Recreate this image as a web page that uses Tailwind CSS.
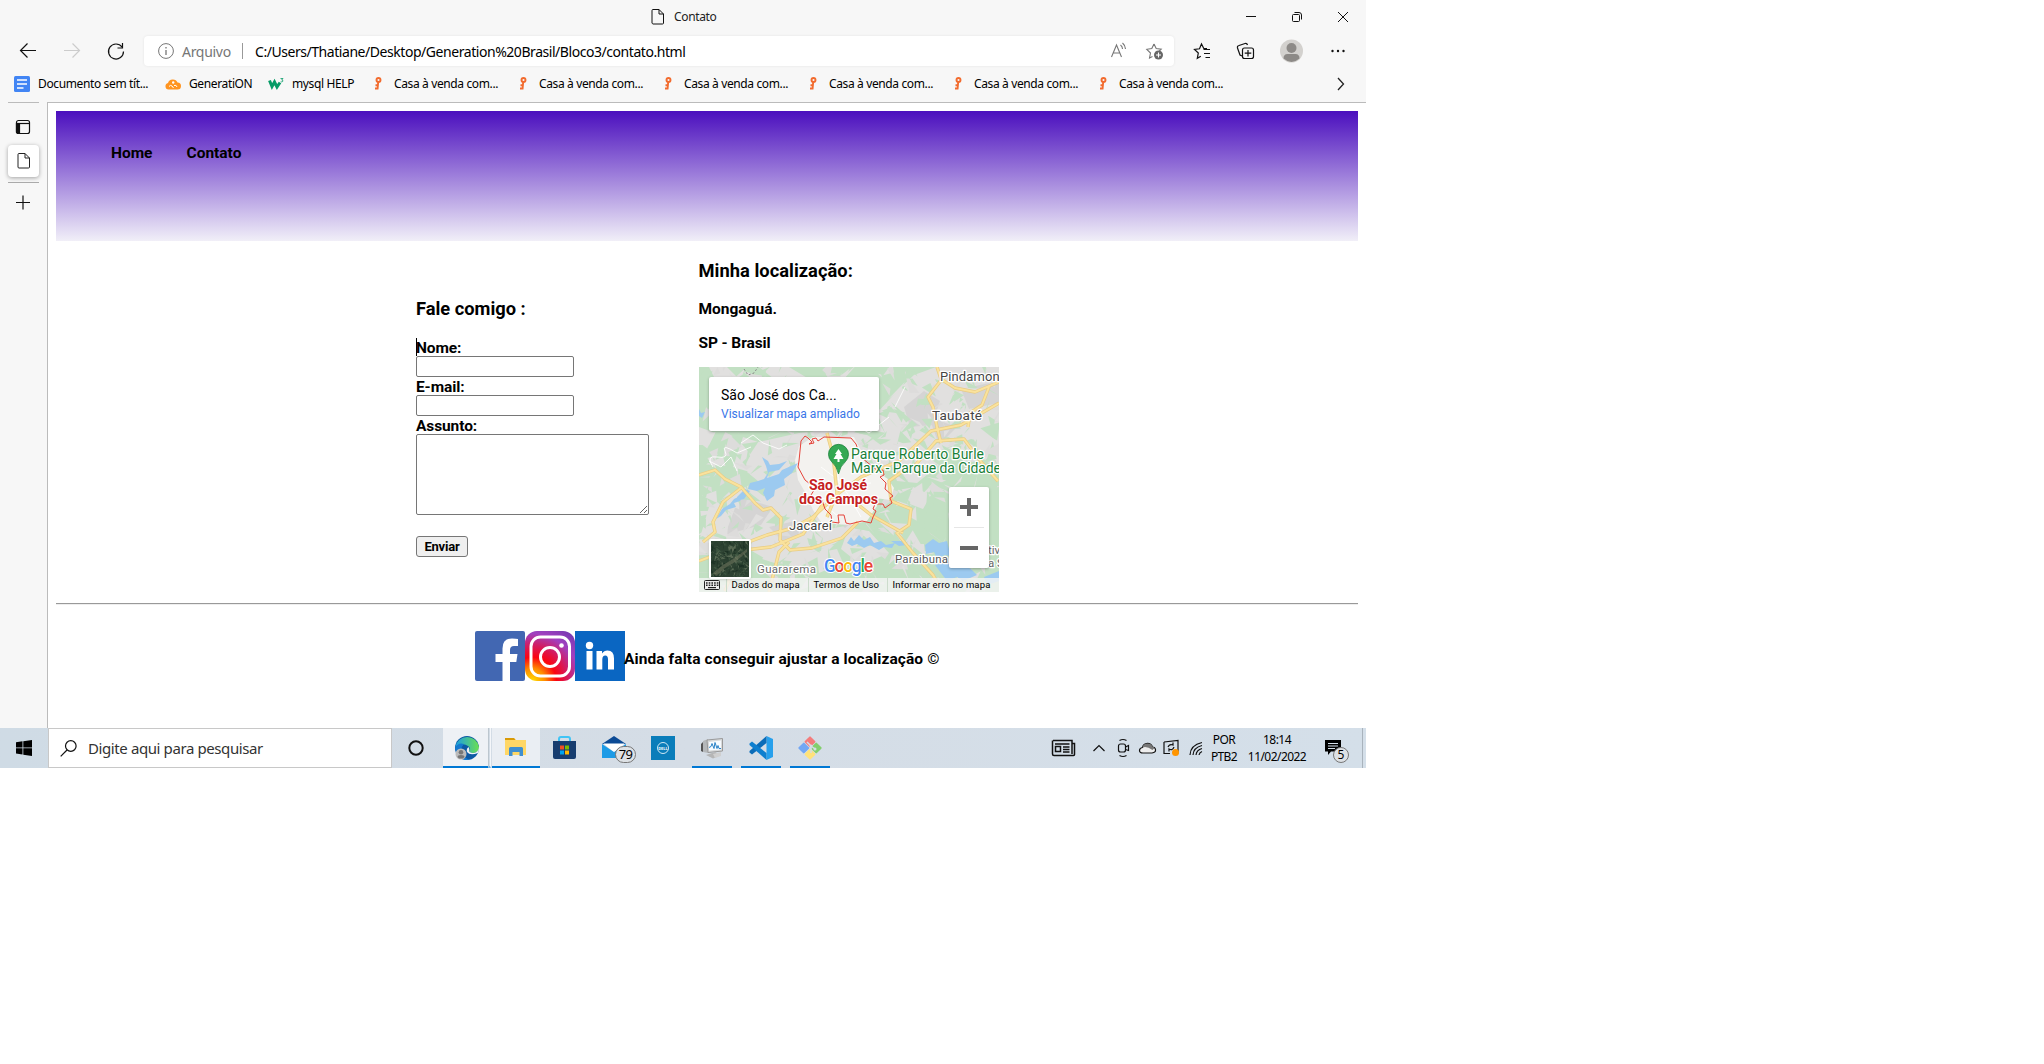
<!DOCTYPE html>
<html lang="pt-BR"><head><meta charset="utf-8"><title>Contato</title>
<script src="https://cdn.jsdelivr.net/npm/@tailwindcss/browser@4"></script></head>
<body class="bg-white font-['Noto_Sans',sans-serif] text-black">
<div class="relative flex h-[768px] w-[1366px] flex-col overflow-hidden bg-[#f7f7f7]">
  <!-- title bar -->
  <div class="flex h-[34px] shrink-0 items-center pl-[650px]">
    <svg class="size-4" viewBox="0 0 16 16" fill="none" stroke="#111"><path d="M3 .5h6l4.500 4.500v9a1 1 0 0 1-1 1H3a1.500 1.500 0 0 1-1-1V1.500a1 1 0 0 1 1-1zM9 .5V5h4.500"/></svg>
    <span class="ml-2 w-[565px] text-[12px] tracking-[-0.35px] text-[#222]">Contato</span>
    <svg class="h-4 w-[110px]" viewBox="0 0 110 16" fill="none" stroke="#111"><path d="M7 7.500h10M99 3l10 10m0-10L99 13"/><rect x="53.500" y="5.500" width="7" height="7" rx="1"/><path d="M55.500 3.500h4.500a2.500 2.500 0 0 1 2.500 2.500v4.500"/></svg>
  </div>
  <!-- address row -->
  <div class="mt-[2px] flex h-[30px] shrink-0 items-center">
    <svg class="h-5 w-[144px]" viewBox="0 0 144 20" fill="none" stroke="#111" stroke-width="1.200"><path d="M36 9.500H20.500m7-7-7 7 7 7"/><path stroke="#ccc" d="M64 9.500h15.500m-7-7 7 7-7 7"/><path d="M122 6a7.500 7.500 0 1 0 1.500 4.500M122.500 2v5h-5"/></svg>
    <div class="flex h-[30px] w-[1030px] items-center rounded bg-white pl-[14px] shadow-[0_0_3px_rgba(0,0,0,0.08)]">
      <svg class="size-4" viewBox="0 0 16 16" fill="none" stroke="#767676"><circle cx="8" cy="8" r="7.400"/><path d="M8 7v5M8 4v1.500" stroke-width="1.300"/></svg>
      <span class="ml-2 w-[60px] text-[14px] tracking-[-0.3px] text-[#767676]">Arquivo</span>
      <span class="h-4 w-px bg-[#999]"></span>
      <span class="ml-3 w-[856px] text-[14px] tracking-[-0.45px] whitespace-nowrap">C:/Users/Thatiane/Desktop/Generation%20Brasil/Bloco3/contato.html</span>
      <svg class="h-5 w-[56px]" viewBox="0 0 56 20" fill="none" stroke="#777" stroke-width="1.100"><path d="M.5 16 5.500 4l5 12M2.200 12h6.600M9.500 4q2 1.500 2 4M11.500 2q3 2.500 3 6"/><path d="m43 3 2.200 4.600 5 .6-2 2M43 3l-2.200 4.600-5 .7L39.500 12l-1 5 3-1.500"/><circle cx="47.500" cy="14" r="4.500" fill="#666" stroke="none"/><path stroke="#fff" d="M47.500 11.500v5M45 14h5"/></svg>
    </div>
    <svg class="h-[30px] w-[190px]" viewBox="0 0 190 30" fill="none" stroke="#111" stroke-width="1.200"><path d="M33 12.500h-3.200L27.500 8l-2 4.800-5 .7 3.800 3.500-1 5.300 3.500-2M29.500 13.500H36M30 17.500h6M31.500 21.500H36"/><path d="M68 20l-2-1-2.500-7q-.5-2 1.500-2.500L71 7.500q2-.5 2.500 1.500"/><rect x="68.500" y="12" width="11" height="10.500" rx="2"/><path d="M74 14v6.500M70.700 17.200h6.600"/><circle cx="117.500" cy="15" r="11.500" fill="#d3d1ce" stroke="none"/><circle cx="117.500" cy="12" r="5" fill="#8d8a87" stroke="none"/><path d="M109.500 22.500q0-4.500 4-4.500h8q4 0 4 4.500-8 7-16 0z" fill="#8d8a87" stroke="none"/><g fill="#111" stroke="none"><circle cx="158.500" cy="15" r="1.200"/><circle cx="164" cy="15" r="1.200"/><circle cx="169.500" cy="15" r="1.200"/></g></svg>
  </div>
  <!-- bookmarks -->
  <div class="flex h-9 shrink-0 items-center pl-[14px] text-[12px] tracking-[-0.37px] whitespace-nowrap">
    <svg class="size-4" viewBox="0 0 16 16"><rect width="16" height="16" rx="1.500" fill="#4285f4"/><path stroke="#fff" stroke-width="1.500" d="M3 4h10M3 8h10M3 12h6.500"/></svg><span class="ml-2 w-[127px]">Documento sem tít...</span>
    <svg class="size-4" viewBox="0 0 16 16"><path d="M3.500 13.500a3.300 3.300 0 0 1-.5-6.500 5 4.800 0 0 1 9.500-.5 3.500 3.500 0 0 1 0 7z" fill="#ff9420"/><circle cx="8.200" cy="6.500" r="1.200" fill="#fff"/><path d="M4 10.500q1.500-2 3-.5l1.500 2M9 9.500q2.500-1 3 1.500" stroke="#fff" fill="none"/></svg><span class="ml-2 w-[79px]">GeneratiON</span>
    <svg class="size-4" viewBox="0 0 16 16"><path d="m1.500 4.500 2.500 6L6.500 6 9 11l3-4.500" fill="none" stroke="#049b66" stroke-width="3"/><path d="M12.500 2.500H15L13.700 4q1.800 0 1 1.500-.8.800-2 .2" fill="none" stroke="#049b66" stroke-width=".8"/></svg><span class="ml-2 w-[78px]">mysql HELP</span>
    <div id="keys" class="flex flex-1 items-center"></div>
    <svg class="mr-[18px] size-4" viewBox="0 0 16 16" fill="none" stroke="#222" stroke-width="1.300"><path d="m6 2 5.500 6L6 14"/></svg>
  </div>
  <div class="flex min-h-0 flex-1">
    <!-- vertical tabs -->
    <div class="flex w-[47px] flex-col items-center">
      <div class="h-px w-[31px] bg-[#bbb]"></div>
      <svg class="mt-4 mr-px size-4" viewBox="0 0 16 16" fill="none" stroke="#111" stroke-width="1.200"><rect x="1.500" y="1.500" width="13" height="13" rx="2"/><path d="M2 4.500h12.500"/><path fill="#111" d="M1.500 4.500h3v10h-2l-1-1z"/></svg>
      <div class="mt-[10px] flex h-8 w-[31px] items-center justify-center rounded bg-white shadow-[0_1px_4px_rgba(0,0,0,0.35)]"><svg class="size-4" viewBox="0 0 16 16" fill="none" stroke="#222"><path d="M3 .5h6l4.500 4.500v9a1 1 0 0 1-1 1H3a1 1 0 0 1-1-1V1.500a1 1 0 0 1 1-1zM9 .5V5h4.500"/></svg></div>
      <div class="mt-[5px] h-px w-[31px] bg-[#aaa]"></div>
      <svg class="mt-3 mr-[2px] size-4" viewBox="0 0 16 16" stroke="#111" stroke-width="1.200"><path d="M1 7.500h14M8 .5v14"/></svg>
    </div>
    <!-- page -->
    <div class="flex-1 border-t border-l border-[#bbb] bg-white px-2 pt-2 font-['Roboto',sans-serif] font-bold">
      <nav class="flex h-[130px] gap-[34px] bg-[linear-gradient(to_bottom,#4b0fbe,#f1eff8)] pt-[30px] pl-[55px] text-[15.5px] leading-6"><span>Home</span><span>Contato</span></nav>
      <main class="flex h-[362px]">
        <form class="ml-[360px] flex w-[282.500px] shrink-0 flex-col items-start pt-[57px] text-[15.5px] tracking-[-0.1px]">
          <h3 class="text-[18.3px] leading-[22px] tracking-normal">Fale comigo :</h3>
          <label class="mt-[18px] flex h-[18px] items-center border-l border-black leading-[18px]"><span class="-ml-px pt-px">Nome:</span></label>
          <input class="h-[21px] w-[158px] shrink-0 rounded-[2px] border border-[#767676]">
          <label class="h-[18px] leading-[21px]">E-mail:</label>
          <input class="h-[21px] w-[158px] shrink-0 rounded-[2px] border border-[#767676]">
          <label class="h-[18px] leading-[21px]">Assunto:</label>
          <textarea class="h-[81px] w-[233px] shrink-0 rounded-[2px] border border-[#767676]"></textarea>
          <button type="button" class="mt-[21px] h-[21px] w-[52px] shrink-0 rounded-[3px] border border-[#767676] bg-[#efefef] text-[13px] leading-[18px] tracking-[-0.2px]">Enviar</button>
        </form>
        <section class="w-[300px] shrink-0 pt-[19px] text-[15.500px]">
          <h3 class="text-[18.300px] leading-[22px] tracking-[0.04px]">Minha localização:</h3>
          <p class="mt-[17px] leading-5">Mongaguá.</p><p class="mt-[14px] leading-5 tracking-[-0.1px]">SP - Brasil</p>
          <div class="relative mt-[14px] h-[225px] w-[300px] overflow-hidden font-normal tracking-normal">
            <svg class="absolute inset-0" width="300" height="225" viewBox="0 0 300 225" font-family="Roboto, sans-serif">
              <rect width="300" height="225" fill="#c2e0c3"/>
              <g fill="#e1e0df">
                <path d="M10 0h18l10 10-20 6zM60 0h30l20 12H75zM200 22l15-14 22-8h63v78l-28-6-22 8-34 14-16-10-30 12-8-12 24-18-8-20zM100 66l40-4 28 6 25 15-8 30-25 40-30 30-40-12-14-30-20 4 14-22-22-18 20-14-18-14zM44 70l24 8 6 10-20 18-20-6zM10 140l40-22 34 26 30 16-28 14-40 6-30 12-16-18z"/>
                <path d="M60 166l60 2 10 16-30 16-30-6-24-14zM150 160l20 4 20 22-28 12-20-16zM190 90l30-6 20 14-22 18-20-2zM270 60l30 4v40l-18-14zM118 186l20-4 6 14-24 10zM0 60l16 6-6 12H0zM180 155l30 2 14 24-20-4zM214 120l18 8-8 14-16-6zM0 176l24-6 6 10-30 8z"/>
              </g>
              <g fill="#d5d4d4"><path d="M40 130l34 10-12 18-36 10zM205 40l20-16 16 10-8 24-22 2zM262 22l38-8v22l-30 6zM70 160l26-6 12 12-24 8zM130 145l30 4-14 12zM230 50l28 10-18 18z"/></g>
              <g id="terrain"></g>
              <path d="M114 70 155 70l8 16 4 12 22 14 6 9-4 12-15-2 2 8-10 15-16 4-16-1-14-2-8-12-8-18-7-12-3-20 4-14z" fill="#f3f2ef"/>
              <g fill="#9ccaf0">
                <path d="M63 90l6 4 2 4 9-1 8-3-8 9-10 2-2 6 12-4 3-4 16-7-6 10-8 6 1 6-10 5-1 6-7 5-4-8 2-5-8 3-9-2 2-6 8-2 6-2 4-6-2-7zM17 152l6-10 8-5 4-5 12-6-6 8-6 2 2 4-10 3-5 6zM38 130l8-8 5 2-6 8-8 2zM0 42l2 4 4-1-3 6-3-2zM148 176l4-6 3 4 5-6 5 5 6-3 4 6 7-2 5 4 9-2-3 5-8-1-5 3-9-5-6 3-7-4-5 2zM226 178l8-6 6 4 8-2 2 8 8 2-2 6-10-2-8 3-3-6-8 2zM236 198l10-4 14 2 12 6 6 6-14 6-6-4-10 4-6-8zM285 210l15-6v10l-12 4zM192 174l14 0 2 4-8 1z"/>
              </g>
              <g fill="none" stroke="#fff" stroke-width="1" opacity=".85"><path d="M42 76l12-8 10 8 16 6 8-4M14 100q-8-12 4-10t8-6 12 2l14-6M10 94l12 6 10-10 6 14M190 50l-20 16-10-6-22 4M136 86l4 30 8 10 14 24M122 100l16 12 14 6 20-2M128 140l12 10M112 128l14 4 10-6M206 20l-10 20"/></g>
              <g fill="none" stroke="#e8cc85" stroke-width="3.400" stroke-linejoin="round"><path d="M0 108l16-5 10 9 16 8 14 16 8 7 8-2 10 10-1 22 10 10 22-2 30-10 16-16"/><path d="M26 224l18-47 24-9 26-7 20-11 26-24 22-16 38-16 32-30 30-6 38-22"/><path d="M42 121l-18 14-10 20 2 10-12 10M0 194l16-6M70 225l10-40 10-10M30 185l42-5 32-13 20-30"/><path d="M300 15l-24 10-20-4-14-9-4-12M243 12l-14 18 5 10 4 20 4 16M269 60l2-14 12-8 7-18"/><path d="M213 102l24-28 28-2 18 24 16 18M192 134l-2-20 14-10M192 134l20 8-2 16-12 8 16 20 20 22 8 14M152 132l20 16 32 18M128 150l10-24-4-38-6-22"/></g>
              <g fill="none" stroke="#fae29c" stroke-width="2" stroke-linejoin="round"><path d="M0 108l16-5 10 9 16 8 14 16 8 7 8-2 10 10-1 22 10 10 22-2 30-10 16-16M26 224l18-47 24-9 26-7 20-11 26-24 22-16 38-16 32-30 30-6 38-22M42 121l-18 14-10 20 2 10-12 10M0 194l16-6M70 225l10-40 10-10M30 185l42-5 32-13 20-30M300 15l-24 10-20-4-14-9-4-12M243 12l-14 18 5 10 4 20 4 16M269 60l2-14 12-8 7-18M213 102l24-28 28-2 18 24 16 18M192 134l-2-20 14-10M192 134l20 8-2 16-12 8 16 20 20 22 8 14M152 132l20 16 32 18M128 150l10-24-4-38-6-22"/></g>
              <path d="M45 2l4 6 6-2 4-6" fill="none" stroke="#888" stroke-dasharray="2 2"/>
              <path d="M109 71l4 4-3 2 5-1-2-4 4-1 2 3 6-4 27 1 5 6 2 6 5 3-1 5 16 13 5-1 1 5-4 2 6 6-1 6 8 7-3 2 2 5-7 5-2-4-8 0-2 5 3 2-3 6-2 6-9-2-12 3-4-1-2-8-6 0 1 8-7-1-1-7-6-6-3-9-9 2-2-7 5-8-6-3-5-4-7-13 1-6 2-20 4-5z" fill="none" stroke="#e5433a"/>
              <g fill="#444" stroke="#fff" stroke-width="2.500" paint-order="stroke" stroke-linejoin="round">
                <text x="241" y="13.500" font-size="13" textLength="67">Pindamonh</text><text x="233" y="52.500" font-size="13.500" textLength="50">Taubaté</text><text x="90" y="162.500" font-size="13" textLength="43">Jacareí</text>
                <text x="58" y="206" font-size="11.500" fill="#666" textLength="59">Guararema</text><text x="196" y="196" font-size="11.500" fill="#555" textLength="53">Paraibuna</text><text x="289" y="187" font-size="11.500" fill="#666">tiva</text><text x="289" y="199.500" font-size="11.500" fill="#666">a Se</text>
                <g fill="#188038" font-size="14"><text x="152" y="91.500" textLength="133">Parque Roberto Burle</text><text x="152" y="105.500" textLength="150">Marx - Parque da Cidade</text></g>
                <g fill="#c5221f" font-size="14" font-weight="700"><text x="110" y="122.500" textLength="58" lengthAdjust="spacingAndGlyphs">São José</text><text x="100" y="136.500" textLength="79" lengthAdjust="spacingAndGlyphs">dos Campos</text></g>
              </g>
              <path d="M139.500 107q-1.500-8-7-12.500a10 10 0 1 1 14 0q-5.500 4.500-7 12.500z" fill="#34a853" stroke="#188038" stroke-width=".8"/><path d="M139.500 82l3.500 5h-1.500l3 5h-4v3h-2v-3h-4l3-5H136z" fill="#fff"/>
              <g font-size="17.500" font-weight="500" stroke="#fff" stroke-width="2" paint-order="stroke"><text y="205" x="125" textLength="49"><tspan fill="#4285f4">G</tspan><tspan fill="#ea4335">o</tspan><tspan fill="#fbbc05">o</tspan><tspan fill="#4285f4">g</tspan><tspan fill="#34a853">l</tspan><tspan fill="#ea4335">e</tspan></text></g>
            </svg>
            <div class="absolute top-[10px] left-[10px] h-[54px] w-[170px] rounded-[2px] bg-white pt-[9px] pl-[12.500px] shadow-[0_1px_3px_rgba(0,0,0,0.3)]"><p class="text-[14px] leading-[18px]">São José dos Ca...</p><p class="text-[12px] leading-[20px] tracking-[0.02px] text-[#3a76e8]">Visualizar mapa ampliado</p></div>
            <div class="absolute top-[120px] left-[250px] flex h-[81px] w-10 flex-col items-center rounded-[2px] bg-white shadow-[0_1px_3px_rgba(0,0,0,0.3)]"><svg width="40" height="81" viewBox="0 0 40 81" stroke="#666" stroke-width="4"><path d="M11 20h18M20 11v18M11 61h18"/><path d="M5 40.500h30" stroke="#e6e6e6" stroke-width="1"/></svg></div>
            <div class="absolute bottom-0 left-0 flex h-[14px] w-full items-center bg-[#f5f5f5]/80 pl-[5px] text-[9.5px] tracking-[0.14px] whitespace-nowrap">
              <svg width="16" height="10" viewBox="0 0 16 10"><rect x=".5" y=".5" width="15" height="9" rx="1" fill="#eee" stroke="#222"/><path stroke="#222" stroke-width="1.500" stroke-dasharray="1.600 1.100" d="M2 3h12.500M2 5.200h12.500"/><path stroke="#222" stroke-width="1.200" d="M4 7.600h8"/></svg>
              <span class="ml-[6px] w-[82px] border-l border-[#ccdccc] pl-[5px] leading-[14px]">Dados do mapa</span><span class="w-[79px] border-l border-[#ccdccc] pl-[5px] leading-[14px]">Termos de Uso</span><span class="border-l border-[#ccdccc] pl-[5px] leading-[14px]">Informar erro no mapa</span>
            </div>
            <svg class="absolute top-[172px] left-[10px] rounded-[2px] border-2 border-white bg-[#2d4232] shadow" width="42" height="40" viewBox="0 0 38 36"><g id="sat"></g><path d="M2 32l10-8 10-6 14-10v3l-12 10-10 6-9 8z" fill="#8b8b70" opacity=".4"/></svg>
          </div>
        </section>
      </main>
      <hr class="border-t border-b border-t-[#999] border-b-[#eee]">
      <footer class="mt-[26px] flex h-[50px] pl-[419px]">
        <svg width="50" height="50" viewBox="0 0 50 50"><rect width="50" height="50" rx="2" fill="#4267b2"/><path fill="#fff" d="M27.500 50V31H20.500V23h7v-5.500Q27.500 7.500 37 7.500q4 0 6 .5v7h-4Q35 15 35 19v4h7.500l-1.200 8H35v19z"/></svg>
        <svg width="50" height="50" viewBox="0 0 50 50"><defs><radialGradient id="ig" cx=".15" cy="1" r="1.250"><stop offset="0" stop-color="#fd0"/><stop offset=".2" stop-color="#ff8c00"/><stop offset=".38" stop-color="#fb0410"/><stop offset=".56" stop-color="#d61a5c"/><stop offset=".76" stop-color="#a040c0"/><stop offset="1" stop-color="#7338b0"/></radialGradient></defs><rect width="50" height="50" rx="12" fill="url(#ig)"/><g fill="none" stroke="#fff" stroke-width="3"><rect x="6" y="6" width="38.500" height="39" rx="9.500"/><circle cx="25" cy="26" r="9.500"/></g><circle cx="36.500" cy="14.500" r="2.300" fill="#fff"/></svg>
        <svg width="50" height="50" viewBox="0 0 50 50"><rect width="50" height="50" fill="#0a66c2"/><g fill="#fff"><circle cx="14.500" cy="14.500" r="3.700"/><path d="M11.500 20H17.500v18.500H11.500zM21.500 20h5.500v2.500q2-3 5.500-3 6.500 0 6.500 8v11h-6V28.500q0-4-2.700-4-3 0-3 4v10h-5.800z"/></g></svg>
        <span class="-ml-px pt-[19px] text-[15.500px] leading-[18px] tracking-[0.09px] whitespace-nowrap">Ainda falta conseguir ajustar a localização <span class="font-normal">©</span></span>
      </footer>
    </div>
  </div>
  <!-- taskbar -->
  <div class="flex h-10 shrink-0 items-center bg-linear-to-r from-[#cfdbe5] via-[#d5dde6] to-[#d4dfe9]">
    <svg class="ml-4 size-4 shrink-0" viewBox="0 0 16 16"><path d="M0 2.200 6.500 1.300v6.200H0zM7.300 1.200 16 0v7.500H7.300zM0 8.300h6.500v6.200L0 13.600zM7.300 8.300H16V16l-8.700-1.200z"/></svg>
    <div class="ml-4 flex h-10 w-[344px] shrink-0 items-center border border-[#c8c8c8] bg-white pl-[11px]"><svg class="size-[17px]" viewBox="0 0 17 17" fill="none" stroke="#111" stroke-width="1.200"><circle cx="10.800" cy="6" r="5.300"/><path d="M7 10 .7 16.300"/></svg><span class="ml-[11px] text-[15px] tracking-[-0.4px] text-[#333]">Digite aqui para pesquisar</span></div>
    <svg class="ml-4 size-4 shrink-0" viewBox="0 0 16 16" fill="none" stroke="#111" stroke-width="2"><circle cx="8" cy="8" r="6.700"/></svg>
    <div class="ml-[19px] flex h-10 w-[45px] shrink-0 items-center justify-center border-b-2 border-[#0078d4] bg-[#eef1f5] pt-px"><svg class="ml-[2px]" width="24" height="24" viewBox="0 0 24 24"><defs><linearGradient id="e1"><stop stop-color="#1b9de2"/><stop offset="1" stop-color="#6be052"/></linearGradient></defs><circle cx="12" cy="12" r="12" fill="#0c59a4"/><path d="M.3 11A12 12 0 0 1 24 11q0 5-5 6-4 0-5-2 2-3-1-5-5-4-12.700 1z" fill="url(#e1)"/><path d="M0 12q3-6 9-4-4 4-2 9 2 5 8 7Q2 25 0 12z" fill="#1479cf"/><path d="M24 11q.2 3-1 6-8 3-11-1-1-3 1.500-5 1.200 2 .5 4 1 2 5 2 4.500-1 5-6z" fill="#eef1f5"/><circle cx="6" cy="18" r="5.500" fill="#bbb"/><circle cx="6" cy="16.300" r="2.300" fill="#777"/><path d="M2.500 21q0-2 3.500-2t3.500 2l-1.500 1.500H4z" fill="#777"/></svg></div>
    <div class="h-10 w-[3px] shrink-0 border-r border-b-2 border-l border-r-[#f5f7fa] border-b-[#6fb1e4] border-l-[#bcc6ce]"></div>
    <div class="ml-px flex h-10 w-12 shrink-0 items-center justify-center border-b-2 border-[#0078d4] bg-[#eaeef3]"><svg width="22" height="20" viewBox="0 0 22 20"><path d="M0 1h9l2 2h10v15H0z" fill="#ffd766"/><path d="M0 1h9l1.500 2H0z" fill="#d99a07"/><path d="M4 19v-7.500Q4 10 5.500 10h11q1.500 0 1.500 1.500V19h-3.500v-4h-7v4z" fill="#3f8fd0"/></svg></div>
    <svg class="ml-[13px] shrink-0" width="23" height="24" viewBox="0 0 23 24"><path d="M6 7V3q0-2 2-2h7q2 0 2 2v4" fill="none" stroke="#40c4f5" stroke-width="2"/><path d="M0 5h23v16q0 2-2 2H2q-2 0-2-2z" fill="#173d6f"/><path fill="#f25022" d="M7 9.500h4v4H7z"/><path fill="#7fba00" d="M12 9.500h4v4h-4z"/><path fill="#00a4ef" d="M7 14.500h4v4H7z"/><path fill="#ffb900" d="M12 14.500h4v4h-4z"/></svg>
    <div class="relative ml-[26px] h-6 w-6 shrink-0"><svg width="24" height="24" viewBox="0 0 24 24"><path d="M0 8 12 0l12 8z" fill="#0b4a95"/><path d="M2 8h20l-9 9z" fill="#fff"/><path d="M0 8l12 8 12-8v14H0z" fill="#1d9be6"/><path d="M1.500 7.500h21L12 15.500z" fill="#fff"/></svg><span class="absolute top-[10px] left-[13px] flex h-[17px] w-[21px] items-center justify-center rounded-full border border-[#777] bg-[#dde1e5] text-[13px] tracking-[-0.8px]">79</span></div>
    <svg class="ml-[25px] shrink-0" width="24" height="24" viewBox="0 0 24 24"><rect width="24" height="24" fill="#0a7dba"/><circle cx="12" cy="12" r="5.500" fill="none" stroke="#cfe8f5"/><text x="12" y="13.500" text-anchor="middle" font-size="4" font-weight="700" fill="#fff">DELL</text></svg>
    <div class="ml-[17px] flex h-10 w-10 shrink-0 items-center justify-center border-b-2 border-[#0078d4] pt-px"><svg class="mr-px" width="24" height="22" viewBox="0 0 24 22"><path d="M1 7l2-2v10l-2-1z" fill="#555"/><path d="M3 4l5-2v14l-5-1z" fill="#b5b8ba"/><path d="M7 3 22.500 1.500v12.500L8 15.500z" fill="#d8dadb" stroke="#999"/><path d="M9 5l12-1.500v9l-12 1z" fill="#f7fbff"/><path d="M9 10.500l2-1 1-3 2 5 1-6 2 6 1-3 1 3h2" fill="none" stroke="#2a82c7"/><path d="M6 18l9-3 6 3-8 3.500z" fill="#b5b5b5"/><path d="M13 17l8-2v4l-6 2z" fill="#cfcfcf"/></svg></div>
    <div class="ml-[9px] flex h-10 w-10 shrink-0 items-center justify-center border-b-2 border-[#0078d4] pt-px"><svg class="mr-px" width="24" height="24" viewBox="0 0 24 24"><path d="M17.500 0 24 3v18l-6.500 3z" fill="#27a0ec"/><path d="M17.500 0v7L3 18.500.5 16.500v-1.500z" fill="#0b6cb8"/><path d="M17.500 24v-7L3 5.500.5 7.500V9z" fill="#0f7fcf"/></svg></div>
    <div class="ml-[9px] flex h-10 w-10 shrink-0 items-center justify-center border-b-2 border-[#0078d4] pt-px"><svg class="mr-px" width="24" height="24" viewBox="0 0 24 24"><g transform="rotate(45 12 12)"><rect x="3.500" y="3.500" width="8.200" height="8.200" rx="1" fill="#f47c7c"/><rect x="12.300" y="3.500" width="8.200" height="8.200" rx="1" fill="#83cf6d"/><rect x="3.500" y="12.300" width="8.200" height="8.200" rx="1" fill="#72a7f4"/><rect x="12.300" y="12.300" width="8.200" height="8.200" rx="1" fill="#ffe27a"/></g><path d="M9 6l4 4v7M13 10l4 3" fill="none" stroke="#d5dde6" stroke-width="1.500"/><circle cx="13" cy="10" r="1.500" fill="#d5dde6"/><circle cx="17" cy="13" r="1.500" fill="#d5dde6"/></svg></div>
    <svg class="ml-[221px] shrink-0" width="153" height="24" viewBox="0 0 153 24" fill="none" stroke="#111" stroke-width="1.200"><path d="M2 4.500h19v3h2.500v11q0 1-1 1H3q-1.500 0-1.500-1.500V4.500M21 7v11M4 8h14.500" stroke-width="1.500"/><path d="M4.500 10.500h5v5h-5zM12 11h6.500M12 13.500h6.500M12 16h6.500" stroke-width="1.500"/><path d="m42.500 15 5.500-5.500L53.500 15"/><rect x="67.500" y="8" width="7" height="8" rx="2"/><path d="M74.500 11l3-1.500v5l-3-1M68.500 4.500q3.500-2 7 0M68.500 19.500q3.500 2 7 0"/><path d="M92 17h9q4-.5 3.500-3.500-.5-2.500-3-2.500-1.500-4-6-3.500-3.500.5-4 4-3 .5-3 3t3.500 2.500z" fill="#eee"/><path d="M91.500 11.500Q96 10 101.500 14l2-2-2-1.500Q100 7 96 7.500q-4 .5-4.500 4z" fill="#777" stroke="none"/><path d="M113 6l14-1.500v13M113 6v11.500h6M117 11q1.500-3.500 5-2V6.500M123 11q-1.500 4-5 2v2.500"/><circle cx="124.500" cy="16.500" r="3.500" fill="#ff9500" stroke="none"/><path d="M139 19q.5-10 12-12.500M142 19q.5-7.500 9-9.500M145 19q.5-5 6-6.500M148 19q.5-2.500 3-3.500"/></svg>
    <div class="-ml-px flex w-[42px] shrink-0 flex-col items-center text-[12px] leading-[17px] tracking-[-0.6px]"><span>POR</span><span>PTB2</span></div>
    <div class="ml-[-2px] flex w-[68px] shrink-0 flex-col items-center text-[12px] leading-[17px] tracking-[-0.55px]"><span>18:14</span><span>11/02/2022</span></div>
    <div class="relative ml-[14px] h-4 w-4 shrink-0"><svg width="16" height="16" viewBox="0 0 16 16"><path d="M0 0h16v11.500H6L3 15v-3.500H0z"/><path d="M3 3.500h10M3 6h10M3 8.500h7" stroke="#d4dfe9"/></svg><span class="absolute top-[7px] left-[8px] flex size-[16px] items-center justify-center rounded-full border border-[#777] bg-[#dde1e5] text-[12px]">5</span></div>
    <div class="ml-[21px] h-10 w-px shrink-0 bg-[#a9b3bc]"></div>
  </div>
</div>
<script>
document.getElementById('keys').innerHTML=Array(6).fill('<div class="flex w-[145px] items-center"><svg class="size-4" viewBox="0 0 16 16" fill="none" stroke="#f26b2e" stroke-width="1.900"><circle cx="8.500" cy="4" r="2"/><path d="M8.200 6 7.500 13.500M7.800 12.500H5M8 9.200H5.500"/></svg><span class="ml-2">Casa à venda com...</span></div>').join('');
// seeded random facets for the terrain and the satellite thumbnail
let s=7;const r=()=>(s=(s*16807)%2147483647)/2147483647;
const tri=(w,h,k,c)=>{const x=r()*w,y=r()*h,p=()=>(x+(r()-.5)*k).toFixed(1)+','+(y+(r()-.5)*k).toFixed(1);return `<polygon points="${p()} ${p()} ${p()}" fill="${c}"/>`};
let t='';for(let i=0;i<620;i++)t+=tri(300,225,22,['#c2e0c3','#e1e0df','#c2e0c3','#dddcdb'][i%4]);
document.getElementById('terrain').innerHTML=t;
t='';for(let i=0;i<300;i++)t+=tri(38,36,7,['#1e3326','#3d5540','#2a3f30','#5a6b55'][i%4]);
document.getElementById('sat').innerHTML=t;
</script>
</body></html>
